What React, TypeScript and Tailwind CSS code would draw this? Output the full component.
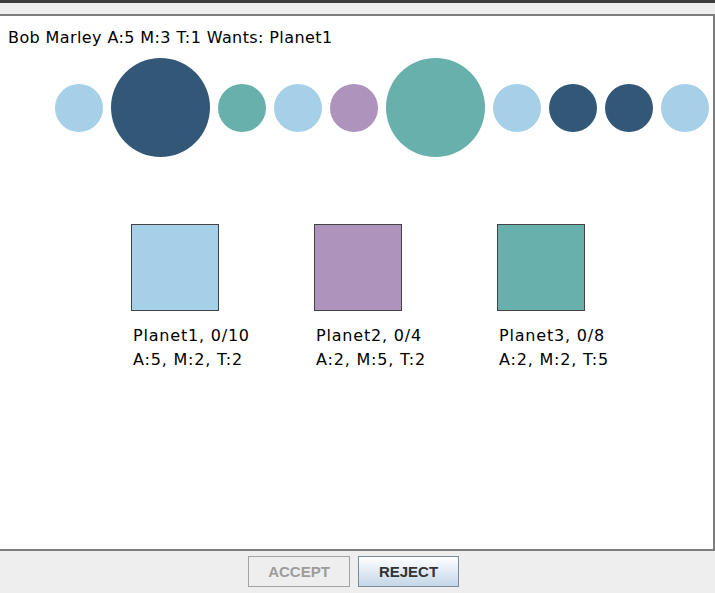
import React from 'react';

const LIGHT = 'bg-[#a6d0e7]';
const NAVY = 'bg-[#325777]';
const TEAL = 'bg-[#67b0ac]';
const PURPLE = 'bg-[#ae93bd]';

interface Token {
  color: string;
  big?: boolean;
}

const tokens: Token[] = [
  { color: LIGHT },
  { color: NAVY, big: true },
  { color: TEAL },
  { color: LIGHT },
  { color: PURPLE },
  { color: TEAL, big: true },
  { color: LIGHT },
  { color: NAVY },
  { color: NAVY },
  { color: LIGHT },
];

const planets = [
  { name: 'Planet1, 0/10', stats: 'A:5, M:2, T:2', color: LIGHT },
  { name: 'Planet2, 0/4', stats: 'A:2, M:5, T:2', color: PURPLE },
  { name: 'Planet3, 0/8', stats: 'A:2, M:2, T:5', color: TEAL },
];

const App: React.FC = () => {
  return (
    <div className="w-[715px] h-[593px] flex flex-col bg-[#eeeeee] overflow-hidden" style={{ fontFamily: '"DejaVu Sans", Verdana, sans-serif' }}>
      <div className="h-[3px] bg-[#3c3c3c]" />
      <div className="h-[11px] bg-[#eeeeee]" />

      {/* main panel */}
      <div className="flex-1 bg-white border-t-2 border-r-2 border-b-2 border-[#7d7d7d] flex flex-col">
        <div className="pl-[8px] pt-[12px] text-[16px] tracking-[0.4px] leading-[20px] text-black">
          Bob Marley A:5 M:3 T:1 Wants: Planet1
        </div>

        <div className="flex items-center gap-[8px] pl-[55px] mt-[10px] h-[99px]">
          {tokens.map((t, i) => (
            <div
              key={i}
              className={`${t.color} rounded-full shrink-0 ${t.big ? 'w-[99px] h-[99px]' : 'w-[48px] h-[48px]'}`}
            />
          ))}
        </div>

        <div className="flex pl-[131px] mt-[67px]">
          {planets.map((p) => (
            <div key={p.name} className="w-[183px] shrink-0 flex flex-col">
              <div className={`${p.color} w-[88px] h-[87px] border border-[#444444]`} />
              <div className="pl-[2px] mt-[13px] text-[16px] tracking-[0.8px] leading-[24px] text-black">
                <div>{p.name}</div>
                <div>{p.stats}</div>
              </div>
            </div>
          ))}
        </div>
      </div>

      {/* buttons */}
      <div className="h-[42px] flex items-start pt-[5px] pl-[248px] gap-[8px]" style={{ fontFamily: '"Liberation Sans", Arial, sans-serif' }}>
        <button className="w-[102px] h-[31px] border border-[#a3a3a3] bg-[#eeeeee] text-[#9c9c9c] font-bold text-[15px] pt-[1px]">
          ACCEPT
        </button>
        <button className="w-[101px] h-[31px] border border-[#7a8a99] bg-gradient-to-b from-white to-[#c4d6e8] text-[#333333] font-bold text-[15px] pt-[1px]">
          REJECT
        </button>
      </div>
    </div>
  );
};

export default App;
